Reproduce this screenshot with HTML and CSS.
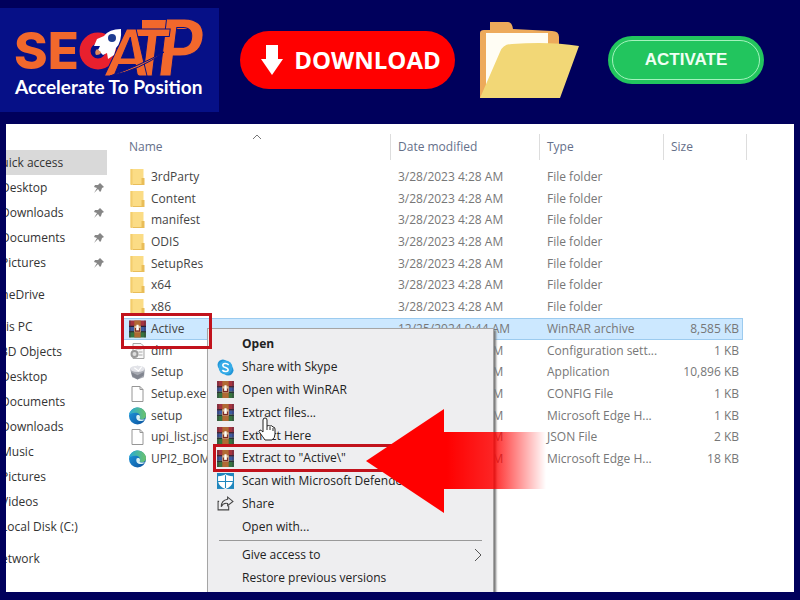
FILE: index.html
```html
<!DOCTYPE html>
<html lang="en">
<head>
<meta charset="utf-8">
<title>Extract archive</title>
<link rel="stylesheet" href="styles.css">
</head>
<body>
<svg class="defs" aria-hidden="true">
  <defs>
    <linearGradient id="edge-a" x1="0" y1="0" x2="1" y2="1"><stop offset="0" stop-color="#1f9be0"/><stop offset="1" stop-color="#0b4f9c"/></linearGradient>
    <linearGradient id="edge-b" x1="0" y1="0" x2="1" y2="0"><stop offset="0" stop-color="#27a9d8"/><stop offset="1" stop-color="#6cc36a"/></linearGradient>
    <linearGradient id="fade" x1="0" x2="1"><stop offset="0" stop-color="#f00"/><stop offset=".45" stop-color="#f00"/><stop offset=".7" stop-color="#f00" stop-opacity=".85"/><stop offset="1" stop-color="#f00" stop-opacity="0"/></linearGradient>
    <symbol id="folder" viewBox="0 0 16 18"><path d="M1 1h13v15H1z" fill="#fbdc85"/><path d="M1 1h2v16H1z" fill="#f3cd6c"/><path d="M12 10h3v7H3v-1h9z" fill="#e9bd58"/></symbol>
    <symbol id="rar" viewBox="0 0 16 16"><path d="M0 0h16v6H0z" fill="#a5343f"/><path d="M0 6h16v4H0z" fill="#3e5aa0"/><path d="M0 10h16v6H0z" fill="#37743f"/><path d="M0 5.500h16M0 10.500h16" stroke="#252032"/><path d="M5 0h6v16H5z" fill="#b06a34"/><path d="M5 5h6v6H5z" fill="#d8bd9a"/><path d="M7 4h2v5H7z" fill="#fff"/><path d="M6 7v3h4V7" stroke="#7b2523" fill="none"/><path d="M1 0v16M15 0v16" stroke="#3b2a45" stroke-opacity=".55"/></symbol>
    <symbol id="file" viewBox="0 0 16 18"><path d="M2.500 1.500h8l3 3v12h-11z" fill="#fff" stroke="#969696"/><path d="M10.500 1.500v3h3" fill="none" stroke="#969696"/></symbol>
    <symbol id="config" viewBox="0 0 16 18"><path d="M3.500 1.500h8l3 3v12h-11z" fill="#f8f8f8" stroke="#a5a5a5"/><path d="M6 5h5M6 7h6M9 10h4M9 13h4" stroke="#aaa"/><circle cx="5" cy="12" r="3" fill="#ddd" stroke="#999" stroke-width="2"/></symbol>
    <symbol id="disc" viewBox="0 0 16 16"><path d="M1 5l7-3 7 3-1 8-6 2-5-2z" fill="#a8abb3"/><ellipse cx="8" cy="5" rx="7" ry="3" fill="#e2e3e8"/><path d="M2 8l6 3 6-3v3l-6 4-5-3z" fill="#81858f"/><path d="M5 4l4 3 3-4" stroke="#fff" fill="none"/></symbol>
    <symbol id="edge" viewBox="0 0 16 16"><circle cx="8" cy="8" r="8" fill="url(#edge-a)"/><path d="M0 7C1 2 5 0 8 0c5 0 8 4 8 7 0 3-2 4-4 4-3 0-3-1-2-2 1-2-1-4-4-4-3 0-5 1-6 2z" fill="url(#edge-b)"/><path d="M7 8c-1 4 3 6 7 4l1-1c-1 0-5 1-5-1 1-1 0-3-1-3s-2 0-2 1z" fill="#d9f1f4"/></symbol>
    <symbol id="skype" viewBox="0 0 16 16"><circle cx="5.500" cy="5.500" r="5" fill="#2397d8"/><circle cx="10.500" cy="10.500" r="5" fill="#2397d8"/><circle cx="8" cy="8" r="6.500" fill="#35abe8"/><path d="M11 5.500C9 3.500 5.500 4 5.500 6c0 2.500 5 1.500 5 4 0 2-3.500 2.500-5.500.500" stroke="#fff" stroke-width="1.500" fill="none"/></symbol>
    <symbol id="shield" viewBox="0 0 16 16"><path d="M0 0h16v15H0z" fill="#1f86bd"/><path d="M1 3q5 0 7-2 2 2 7 2v5q-1 5-7 7-6-2-7-7z" fill="#fff"/><path d="M8 2v12M1 8h14" stroke="#1f86bd"/></symbol>
    <symbol id="share" viewBox="0 0 16 16"><path d="M2 6H1v8h10v-4" fill="none" stroke="#444"/><path d="M10 2l5 4-5 4V8Q6 7 4 11q0-6 6-7z" fill="none" stroke="#444"/></symbol>
    <symbol id="pin" viewBox="0 0 12 12"><path d="M7 1l4 4-2 1-1 3-1 1-2-3-4 4 3-5-3-1 1-2 3 0z" fill="#868686"/></symbol>
  </defs>
</svg>

<header class="banner">
  <a class="logo" href="#" aria-label="SEO ATP, Accelerate To Position">
    <svg class="logo-art" viewBox="0 0 219 104" aria-hidden="true">
      <text class="logo-letters" x="14" y="61">SE</text>
      <circle cx="98" cy="43" r="13" fill="none" stroke="#e8202e" stroke-width="11"/>
      <path d="M142 12h48v9h-48z" fill="#f2682c"/>
      <text class="logo-slanted tall-letter" x="157" y="68">P</text>
      <text class="logo-slanted" x="132" y="68">T</text>
      <text class="logo-slanted" x="107" y="68">A</text>
      <path d="M110 68q30-6 54-24-23 13-54 24z" fill="#f2682c" stroke="#061087"/>
      <path d="M121 21Q109 21 104 28l-7 3-3 7 6 0-2 4 5 5 4-2 1 6 6-4 2-7Q122 34 121 21z" fill="#fff"/>
      <circle cx="112" cy="30" r="4" fill="#1e3c91"/>
      <path d="M97 41q-3 3-1 6 5 0 5-3z" fill="#e0885a"/>
      <text class="logo-tagline" x="15" y="86">Accelerate To Position</text>
    </svg>
  </a>
  <button class="download" type="button">
    <svg class="download-icon" viewBox="0 0 24 32" aria-hidden="true"><path d="M6 1h12v14h5L12 31 1 15h5z" fill="#fff"/></svg>
    DOWNLOAD
  </button>
  <svg class="big-folder" viewBox="0 0 102 78" aria-hidden="true">
    <path d="M1 77V12q0-3 4-3h6V1h18q4 0 5 7l39 2q7 0 7 6v20L20 77z" fill="#edaa5b"/>
    <path d="M7 12h62v30L7 70z" fill="#fffdf4"/>
    <path d="M1 77l20-46q3-8 12-8 37-3 67 2L81 77z" fill="#f2d776"/>
  </svg>
  <button class="activate" type="button"><span class="activate-face">ACTIVATE</span></button>
</header>

<main class="window">
  <nav class="sidebar" aria-label="Folders">
    <ul class="group">
      <li class="current"><a class="place root" href="#">Quick access</a></li>
      <li><a class="place" href="#">Desktop<svg class="pin"><use href="#pin"/></svg></a></li>
      <li><a class="place" href="#">Downloads<svg class="pin"><use href="#pin"/></svg></a></li>
      <li><a class="place" href="#">Documents<svg class="pin"><use href="#pin"/></svg></a></li>
      <li><a class="place" href="#">Pictures<svg class="pin"><use href="#pin"/></svg></a></li>
    </ul>
    <ul class="group"><li><a class="place root" href="#">OneDrive</a></li></ul>
    <ul class="group">
      <li><a class="place root" href="#">This PC</a></li>
      <li><a class="place" href="#">3D Objects</a></li>
      <li><a class="place" href="#">Desktop</a></li>
      <li><a class="place" href="#">Documents</a></li>
      <li><a class="place" href="#">Downloads</a></li>
      <li><a class="place" href="#">Music</a></li>
      <li><a class="place" href="#">Pictures</a></li>
      <li><a class="place" href="#">Videos</a></li>
      <li><a class="place" href="#">Local Disk (C:)</a></li>
    </ul>
    <ul class="group"><li><a class="place root" href="#">Network</a></li></ul>
  </nav>

  <section class="listing">
    <table class="files">
      <thead>
        <tr><th class="sorted">Name<svg class="caret" viewBox="0 0 10 6" aria-hidden="true"><path d="M1 5l4-4 4 4" fill="none" stroke="#777"/></svg></th><th>Date modified</th><th>Type</th><th>Size</th></tr>
      </thead>
      <tbody>
        <tr><td><svg class="icon"><use href="#folder"/></svg>3rdParty</td><td>3/28/2023 4:28 AM</td><td>File folder</td><td></td></tr>
        <tr><td><svg class="icon"><use href="#folder"/></svg>Content</td><td>3/28/2023 4:28 AM</td><td>File folder</td><td></td></tr>
        <tr><td><svg class="icon"><use href="#folder"/></svg>manifest</td><td>3/28/2023 4:28 AM</td><td>File folder</td><td></td></tr>
        <tr><td><svg class="icon"><use href="#folder"/></svg>ODIS</td><td>3/28/2023 4:28 AM</td><td>File folder</td><td></td></tr>
        <tr><td><svg class="icon"><use href="#folder"/></svg>SetupRes</td><td>3/28/2023 4:28 AM</td><td>File folder</td><td></td></tr>
        <tr><td><svg class="icon"><use href="#folder"/></svg>x64</td><td>3/28/2023 4:28 AM</td><td>File folder</td><td></td></tr>
        <tr><td><svg class="icon"><use href="#folder"/></svg>x86</td><td>3/28/2023 4:28 AM</td><td>File folder</td><td></td></tr>
        <tr class="selected"><td><svg class="icon"><use href="#rar"/></svg>Active</td><td>12/25/2024 9:44 AM</td><td>WinRAR archive</td><td>8,585 KB</td></tr>
        <tr><td><svg class="icon"><use href="#config"/></svg>dim</td><td>3/28/2023 4:28 AM</td><td>Configuration sett...</td><td>1 KB</td></tr>
        <tr><td><svg class="icon"><use href="#disc"/></svg>Setup</td><td>3/28/2023 4:28 AM</td><td>Application</td><td>10,896 KB</td></tr>
        <tr><td><svg class="icon"><use href="#file"/></svg>Setup.exe.config</td><td>3/28/2023 4:28 AM</td><td>CONFIG File</td><td>1 KB</td></tr>
        <tr><td><svg class="icon"><use href="#edge"/></svg>setup</td><td>3/28/2023 4:28 AM</td><td>Microsoft Edge H...</td><td>1 KB</td></tr>
        <tr><td><svg class="icon"><use href="#file"/></svg>upi_list.json</td><td>3/28/2023 4:28 AM</td><td>JSON File</td><td>2 KB</td></tr>
        <tr><td><svg class="icon"><use href="#edge"/></svg>UPI2_BOM</td><td>3/28/2023 4:28 AM</td><td>Microsoft Edge H...</td><td>18 KB</td></tr>
      </tbody>
    </table>
  </section>

  <div class="menu" role="menu">
    <div class="menu-group">
      <button class="item default" role="menuitem">Open</button>
      <button class="item" role="menuitem"><svg class="icon"><use href="#skype"/></svg>Share with Skype</button>
      <button class="item" role="menuitem"><svg class="icon"><use href="#rar"/></svg>Open with WinRAR</button>
      <button class="item" role="menuitem"><svg class="icon"><use href="#rar"/></svg>Extract files...</button>
      <button class="item" role="menuitem"><svg class="icon"><use href="#rar"/></svg>Extract Here</button>
      <button class="item" role="menuitem"><svg class="icon"><use href="#rar"/></svg>Extract to "Active\"</button>
      <button class="item" role="menuitem"><svg class="icon"><use href="#shield"/></svg>Scan with Microsoft Defender...</button>
      <button class="item" role="menuitem"><svg class="icon"><use href="#share"/></svg>Share</button>
      <button class="item" role="menuitem">Open with...</button>
    </div>
    <hr class="separator">
    <button class="item tall" role="menuitem">Give access to<svg class="chevron" viewBox="0 0 8 14" aria-hidden="true"><path d="M1 1l6 6-6 6" fill="none" stroke="#555"/></svg></button>
    <button class="item tall" role="menuitem">Restore previous versions</button>
  </div>

  <div class="mark mark-file"></div>
  <div class="mark mark-extract"></div>
  <svg class="pointer" viewBox="0 0 18 24" aria-hidden="true"><path d="M5 14V3q0-2 2-2t2 2v6q1-1 3 0 2-1 3 1 2 0 2 2v5q0 4-3 6H7Q5 20 2 16q-2-2 0-3 1 0 3 2z" fill="#fff" stroke="#222"/><path d="M9 9v4M12 10v3M15 11v3" stroke="#222"/></svg>
  <svg class="arrow" viewBox="0 0 180 104" aria-hidden="true"><path d="M0 52L78 0v23h102v57H78v24z" fill="url(#fade)"/></svg>
</main>
</body>
</html>
```
FILE: styles.css
```css
* { box-sizing: border-box; }

body {
  margin: 0;
  min-height: 100vh;
  display: flex;
  flex-direction: column;
  padding: 8px 6px 8px 0;
  background: #00005c;
  font-family: "Open Sans", "Noto Sans", sans-serif;
  font-size: 12px;
  line-height: 16px;
}

button { border: 0; padding: 0; font: inherit; color: inherit; }
a { color: inherit; text-decoration: none; }
ul { list-style: none; margin: 0; padding: 0; }
.defs { position: absolute; width: 0; height: 0; }
.icon { width: 17px; height: 18px; flex: none; }

/* Banner */
.banner { display: flex; align-items: center; height: 104px; }
.logo { width: 219px; height: 104px; background: #061087; margin-right: 21px; }
.logo-art { display: block; width: 219px; height: 104px; }
.logo-letters { font: 800 51px Inter, sans-serif; fill: #f2682c; }
.logo-slanted { font: italic 900 64px Lato, sans-serif; fill: #f2682c; stroke: #061087; }
.tall-letter { font-size: 78px; }
.logo-tagline { font: 700 19px Lato, sans-serif; fill: #fff; }
.download {
  display: flex;
  align-items: center;
  justify-content: center;
  gap: 10px;
  width: 215px;
  height: 58px;
  padding-left: 6px;
  border-radius: 29px;
  background: #f00;
  color: #fff;
  font-size: 24px;
  font-weight: 700;
}
.download-icon { width: 24px; height: 32px; }
.big-folder { width: 102px; height: 78px; margin: 0 27px 0 24px; }
.activate { width: 156px; height: 48px; padding: 4px; border-radius: 24px; background: #22c55e; color: #f0fff4; }
.activate-face {
  display: flex;
  align-items: center;
  justify-content: center;
  height: 40px;
  border: 1px solid #a4f3bd;
  border-radius: 20px;
  font: 700 17px "Liberation Sans", sans-serif;
}

/* Explorer window */
.window {
  position: relative;
  flex: 1;
  display: flex;
  margin: 12px 0 0 6px;
  background: #fff;
  overflow: hidden;
}
.sidebar { width: 101px; padding-top: 26px; overflow: hidden; color: #333; }
.group { margin-bottom: 7px; }
.place { display: flex; align-items: center; justify-content: space-between; height: 25px; padding-right: 2px; margin-left: -5px; white-space: nowrap; }
.root { margin-left: -14px; }
.current { background: #d9d9d9; }
.pin { width: 12px; height: 12px; }

.listing { flex: 1; padding: 10px 47px 0 15px; }
.files { display: block; color: #777; }
.files thead { display: block; margin-bottom: 6px; }
.files tbody { display: grid; grid-auto-rows: 1fr; height: 304px; margin-right: 4px; }
.files tr { display: grid; grid-template-columns: 1fr 149px 124px 79px; }
.files thead tr { grid-template-columns: 1fr 149px 124px 83px; }
.files th {
  display: flex;
  align-items: center;
  position: relative;
  height: 26px;
  padding: 0 7px;
  border-right: 1px solid #ddd;
  color: #65708a;
  font-weight: 400;
}
.caret { position: absolute; left: 130px; top: 0; width: 10px; height: 6px; }
.files td { display: flex; align-items: center; padding: 0 7px; white-space: nowrap; }
.files td:first-child { gap: 5px; color: #444; }
.files td:last-child { justify-content: flex-end; padding-right: 4px; }
.selected { background: #cce8ff; outline: 1px solid #9ccbef; outline-offset: -1px; }

/* Context menu */
.menu {
  position: absolute;
  left: 201px;
  top: 204px;
  width: 287px;
  height: 280px;
  padding-top: 4px;
  background: #eeeef0;
  border: 1px solid #a5a5a5;
  box-shadow: 2px 2px 2px #777;
  color: #222;
}
.menu-group { display: flex; flex-direction: column; height: 205px; }
.item { position: relative; display: flex; flex: 1; align-items: center; width: 100%; padding-left: 34px; background: none; text-align: left; white-space: nowrap; }
.item .icon { margin: 0 8px 0 -25px; height: 17px; }
.default { font-weight: 700; }
.tall { height: 23px; }
.separator { height: 1px; margin: 2px 11px; border: 0; background: #999; }
.chevron { width: 8px; height: 14px; margin: 0 11px 0 auto; }

/* Annotations */
.mark { position: absolute; border: 3px solid #c1121c; }
.mark-file { left: 115px; top: 189px; width: 91px; height: 36px; }
.mark-extract { left: 207px; top: 320px; width: 200px; height: 28px; }
.pointer { position: absolute; left: 252px; top: 293px; width: 18px; height: 24px; }
.arrow { position: absolute; left: 360px; top: 285px; width: 180px; height: 104px; }
```
